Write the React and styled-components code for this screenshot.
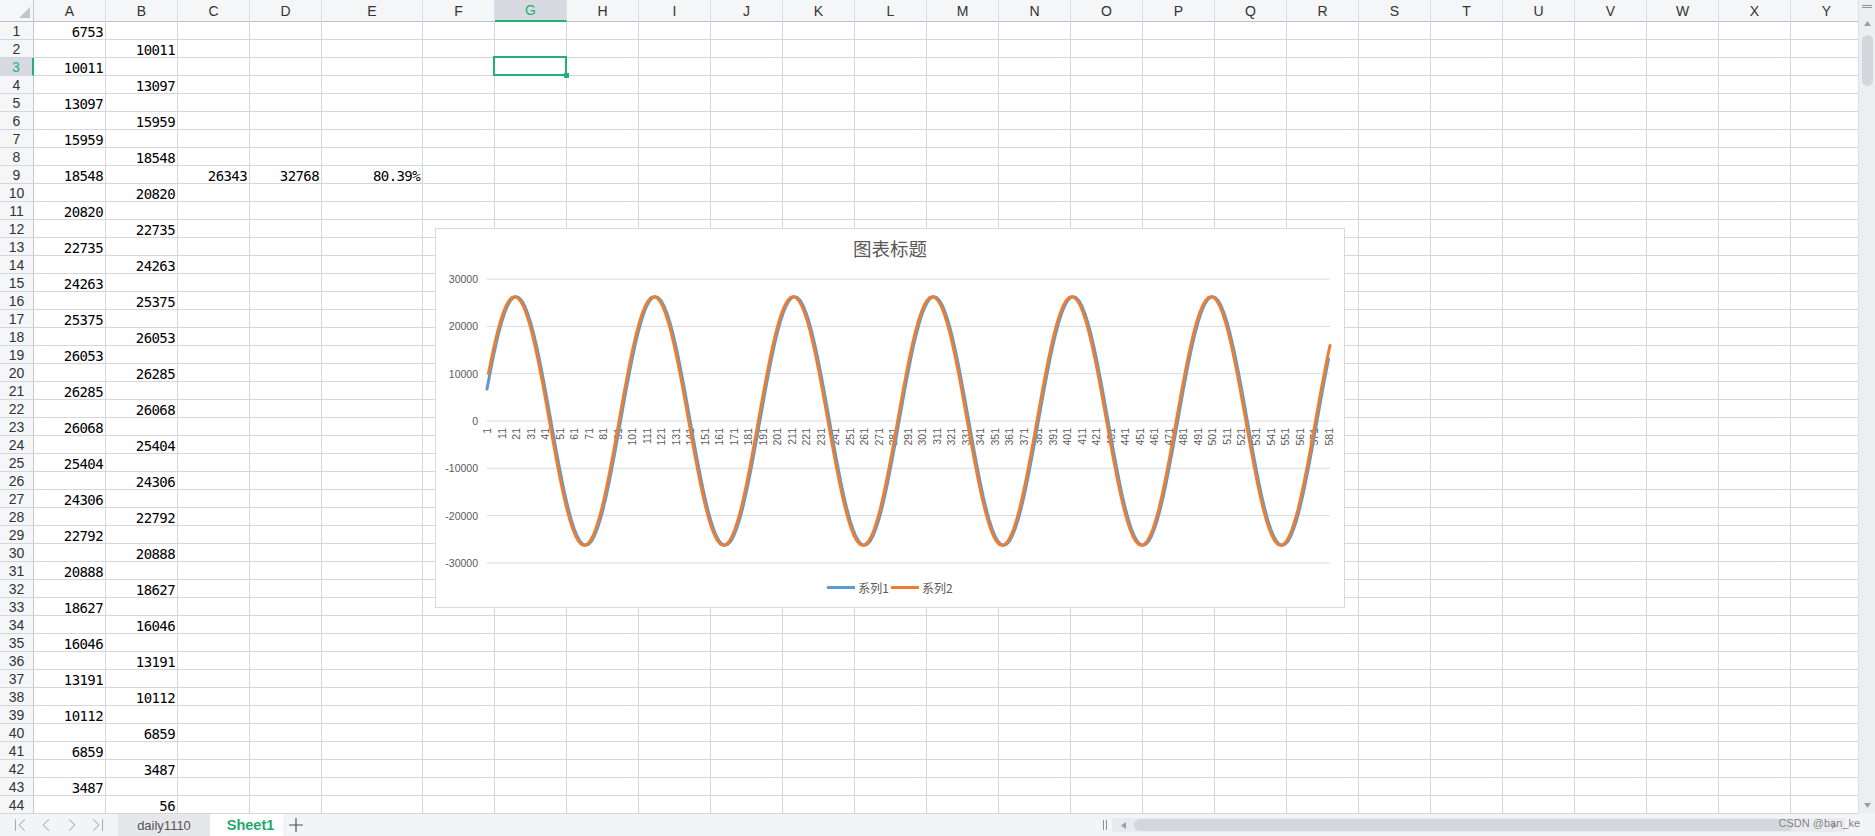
import React from "react";
import styled, { createGlobalStyle } from "styled-components";
import { ChevronFirst, ChevronLeft, ChevronRight, ChevronLast, Plus } from "lucide-react";

const GREEN = "#21b273";
const LINE = "#d2d6df";
const HEAD_BG = "#f5f6f8";
const HEAD_SEL = "#d7dae0";

const GlobalStyle = createGlobalStyle`
  html, body { margin: 0; padding: 0; background: #fff; overflow: hidden; }
`;

const Window = styled.div`
  position: relative;
  width: 1875px;
  height: 836px;
  display: flex;
  flex-direction: column;
  overflow: hidden;
  font-family: "Liberation Sans", Arial, sans-serif;
  background: #fff;
`;

const Main = styled.div`
  display: flex;
  height: 814px;
`;

const SheetArea = styled.div`
  position: relative;
  flex: 1;
  overflow: hidden;
`;

const Sheet = styled.div`
  display: grid;
  grid-template-columns: 34px repeat(4, 72px) 101px repeat(20, 72px);
  grid-template-rows: 22px repeat(44, 18px);
`;

const Corner = styled.div`
  box-sizing: border-box;
  background: ${HEAD_BG};
  border-right: 1px solid #c3c8d1;
  border-bottom: 1px solid #bcc1ca;
  display: flex;
  align-items: flex-end;
  justify-content: flex-end;
  padding: 0 3px 3px 0;
`;

const ColHead = styled.div`
  box-sizing: border-box;
  display: flex;
  align-items: center;
  justify-content: center;
  font-size: 14px;
  color: ${({ $active }) => ($active ? GREEN : "#333")};
  background: ${({ $active }) => ($active ? HEAD_SEL : HEAD_BG)};
  border-right: 1px solid #dcdfe5;
  border-bottom: ${({ $active }) => ($active ? `2px solid ${GREEN}` : "1px solid #bcc1ca")};
`;

const RowHead = styled.div`
  box-sizing: border-box;
  display: flex;
  align-items: center;
  justify-content: center;
  font-size: 14px;
  color: ${({ $active }) => ($active ? GREEN : "#333")};
  background: ${({ $active }) => ($active ? HEAD_SEL : HEAD_BG)};
  border-right: ${({ $active }) => ($active ? `2px solid ${GREEN}` : "1px solid #c3c8d1")};
  border-bottom: 1px solid ${LINE};
`;

const Cell = styled.div`
  box-sizing: border-box;
  position: ${({ $selected }) => ($selected ? "relative" : "static")};
  display: flex;
  align-items: flex-end;
  justify-content: flex-end;
  padding-right: 2px;
  border-right: 1px solid ${LINE};
  border-bottom: 1px solid ${LINE};
  font-family: "DejaVu Sans Mono", "Liberation Mono", monospace;
  font-size: 14px;
  letter-spacing: -0.6px;
  line-height: 13px;
  color: #000;
  white-space: nowrap;
`;

const Selection = styled.div`
  position: absolute;
  top: -2px;
  left: -2px;
  right: -1px;
  bottom: -1px;
  border: 2px solid ${GREEN};
  pointer-events: none;
`;

const FillHandle = styled.div`
  position: absolute;
  right: -4px;
  bottom: -4px;
  width: 5px;
  height: 5px;
  background: ${GREEN};
`;

/* ---------- chart ---------- */

const ChartBox = styled.div`
  position: absolute;
  left: 435px;
  top: 228px;
  width: 910px;
  height: 380px;
  box-sizing: border-box;
  border: 1px solid #d6d9df;
  background: #fff;
  display: flex;
  flex-direction: column;
`;

const ChartTitle = styled.div`
  height: 32px;
  box-sizing: border-box;
  padding-top: 7px;
  line-height: 24px;
  text-align: center;
  font-family: "Noto Sans CJK SC", "Noto Sans", sans-serif;
  font-size: 18.5px;
  color: #595959;
`;

const Plot = styled.svg`
  display: block;
  width: 908px;
  height: 316px;
  font-family: "Liberation Sans", Arial, sans-serif;
`;

const Legend = styled.div`
  height: 20px;
  display: flex;
  align-items: center;
  justify-content: center;
  gap: 2px;
  font-family: "Noto Sans CJK SC", "Noto Sans", sans-serif;
  font-size: 12px;
  color: #595959;
`;

const LegendItem = styled.div`
  display: flex;
  align-items: center;
`;

const Swatch = styled.span`
  width: 28px;
  height: 3px;
  margin-right: 3px;
  background: ${({ $color }) => $color};
`;

const AMP = 26285;
const PH = 0.2597;
const STEP = Math.PI / 48;
const PLOT_L = 51;
const PLOT_R = 894;
const ZERO_Y = 160;
const PX_PER = 0.00473;
const sx = (i) => PLOT_L + (i - 1) * ((PLOT_R - PLOT_L) / 581);
const sy = (v) => ZERO_Y - v * PX_PER;

function seriesPath(start, end, offset) {
  const pts = [];
  for (let r = start; r <= end; r += 2) {
    const v = AMP * Math.sin(PH + (r - 1 + offset) * STEP);
    pts.push(`${sx(r).toFixed(2)},${sy(v).toFixed(2)}`);
  }
  return "M" + pts.join("L");
}

const BLUE_PATH = seriesPath(1, 581, 0);
const ORANGE_PATH = seriesPath(2, 582, 1);
const Y_TICKS = [30000, 20000, 10000, 0, -10000, -20000, -30000];
const X_TICKS = Array.from({ length: 59 }, (_, k) => 1 + k * 10);

function Chart() {
  return (
    <ChartBox>
      <ChartTitle>图表标题</ChartTitle>
      <Plot viewBox="0 0 908 316">
        {Y_TICKS.map((v) => (
          <g key={v}>
            <line x1={PLOT_L} x2={PLOT_R} y1={sy(v)} y2={sy(v)} stroke="#d9d9d9" strokeWidth="1" />
            <text x="42" y={sy(v)} textAnchor="end" dominantBaseline="central" fontSize="10.5" fill="#595959">
              {v}
            </text>
          </g>
        ))}
        {X_TICKS.map((i) => (
          <text
            key={i}
            transform={`translate(${sx(i).toFixed(2)},167) rotate(-90)`}
            textAnchor="end"
            dominantBaseline="central"
            fontSize="10.5"
            fill="#595959"
          >
            {i}
          </text>
        ))}
        <path d={BLUE_PATH} fill="none" stroke="#5b9bd5" strokeWidth="3" strokeLinejoin="round" strokeLinecap="round" />
        <path d={ORANGE_PATH} fill="none" stroke="#ed7d31" strokeWidth="3" strokeLinejoin="round" strokeLinecap="round" />
      </Plot>
      <Legend>
        <LegendItem>
          <Swatch $color="#5b9bd5" />
          系列1
        </LegendItem>
        <LegendItem>
          <Swatch $color="#ed7d31" />
          系列2
        </LegendItem>
      </Legend>
    </ChartBox>
  );
}

/* ---------- scrollbars & bottom bar ---------- */

const VScroll = styled.div`
  width: 17px;
  flex-shrink: 0;
  box-sizing: border-box;
  border-left: 1px solid #dde0e6;
  background: #eceef2;
  display: flex;
  flex-direction: column;
  align-items: center;
`;

const MenuLines = styled.div`
  margin-top: 5px;
  width: 10px;
  height: 1px;
  border-top: 1px solid #8f959e;
  border-bottom: 1px solid #8f959e;
`;

const ArrowSlot = styled.div`
  height: 18px;
  width: 100%;
  display: flex;
  align-items: center;
  justify-content: center;
  flex-shrink: 0;
`;

const VThumb = styled.div`
  margin-top: 3px;
  width: 11px;
  height: 51px;
  border-radius: 6px;
  background: #d3d6dc;
`;

const Spacer = styled.div`
  flex: 1;
`;

const Tri = ({ dir }) => {
  const pts = {
    up: "0,5 3.5,0 7,5",
    down: "0,0 7,0 3.5,5",
    left: "5,0 5,7 0,3.5",
    right: "0,0 0,7 5,3.5",
  }[dir];
  const vertical = dir === "up" || dir === "down";
  return (
    <svg width={vertical ? 7 : 5} height={vertical ? 5 : 7}>
      <polygon points={pts} fill="#9aa0aa" />
    </svg>
  );
};

const BottomBar = styled.div`
  height: 22px;
  display: flex;
  align-items: stretch;
  background: #f3f4f6;
`;

const NavGroup = styled.div`
  display: flex;
  padding-left: 7px;
  margin-right: 7px;
  color: #a3a8b0;
`;

const NavButton = styled.div`
  width: 26px;
  display: flex;
  align-items: center;
  justify-content: center;
`;

const Tab = styled.div`
  width: ${({ $w }) => $w}px;
  box-sizing: border-box;
  display: flex;
  align-items: center;
  justify-content: center;
  padding-left: ${({ $active }) => ($active ? 8 : 0)}px;
  background: ${({ $active }) => ($active ? "#fff" : "#e5e7eb")};
  color: ${({ $active }) => ($active ? "#1ea86a" : "#555")};
  font-weight: ${({ $active }) => ($active ? 700 : 400)};
  font-size: ${({ $active }) => ($active ? 14.5 : 13)}px;
`;

const AddTab = styled.div`
  width: 26px;
  display: flex;
  align-items: center;
  justify-content: center;
  color: #444;
`;

const HScrollArea = styled.div`
  width: 777px;
  display: flex;
  align-items: center;
`;

const Grip = styled.div`
  width: 14px;
  display: flex;
  justify-content: center;
  gap: 2px;
  &::before,
  &::after {
    content: "";
    width: 1px;
    height: 10px;
    background: #8b9098;
  }
`;

const HTrack = styled.div`
  width: 733px;
  height: 14px;
  display: flex;
  align-items: center;
  background: #e8eaee;
`;

const HArrow = styled.div`
  width: 22px;
  display: flex;
  justify-content: center;
`;

const HThumb = styled.div`
  width: 659px;
  height: 12px;
  border-radius: 6px;
  background: #d3d6dc;
`;

const Watermark = styled.div`
  position: absolute;
  right: 15px;
  bottom: 7px;
  font-size: 11px;
  color: rgba(80, 80, 80, 0.75);
  text-shadow: 0 0 2px #fff;
  pointer-events: none;
`;

/* ---------- data ---------- */

const COLS = "ABCDEFGHIJKLMNOPQRSTUVWXY".split("");
const COL_A = [6753, 10011, 13097, 15959, 18548, 20820, 22735, 24263, 25375, 26053, 26285, 26068, 25404, 24306, 22792, 20888, 18627, 16046, 13191, 10112, 6859, 3487];
const COL_B = [10011, 13097, 15959, 18548, 20820, 22735, 24263, 25375, 26053, 26285, 26068, 25404, 24306, 22792, 20888, 18627, 16046, 13191, 10112, 6859, 3487, 56];
const EXTRA = { "9-2": "26343", "9-3": "32768", "9-4": "80.39%" };

function cellValue(row, col) {
  if (col === 0 && row % 2 === 1) return COL_A[(row - 1) / 2];
  if (col === 1 && row % 2 === 0) return COL_B[row / 2 - 1];
  return EXTRA[`${row}-${col}`] || "";
}

const ROWS = Array.from({ length: 44 }, (_, i) => i + 1);
const SEL_ROW = 3;
const SEL_COL = 6;

export default function App() {
  return (
    <>
      <GlobalStyle />
      <Window>
        <Main>
          <SheetArea>
            <Sheet>
              <Corner>
                <svg width="11" height="11">
                  <polygon points="11,0 11,11 0,11" fill="#c1c5cc" />
                </svg>
              </Corner>
              {COLS.map((c, ci) => (
                <ColHead key={c} $active={ci === SEL_COL}>
                  {c}
                </ColHead>
              ))}
              {ROWS.map((r) => (
                <React.Fragment key={r}>
                  <RowHead $active={r === SEL_ROW}>{r}</RowHead>
                  {COLS.map((c, ci) => {
                    const selected = r === SEL_ROW && ci === SEL_COL;
                    return (
                      <Cell key={c} $selected={selected}>
                        {cellValue(r, ci)}
                        {selected && (
                          <Selection>
                            <FillHandle />
                          </Selection>
                        )}
                      </Cell>
                    );
                  })}
                </React.Fragment>
              ))}
            </Sheet>
            <Chart />
          </SheetArea>
          <VScroll>
            <MenuLines />
            <ArrowSlot style={{ marginTop: 6 }}>
              <Tri dir="up" />
            </ArrowSlot>
            <VThumb />
            <Spacer />
            <ArrowSlot>
              <Tri dir="down" />
            </ArrowSlot>
          </VScroll>
        </Main>
        <BottomBar>
          <NavGroup>
            <NavButton>
              <ChevronFirst size={22} strokeWidth={1.1} />
            </NavButton>
            <NavButton>
              <ChevronLeft size={22} strokeWidth={1.1} />
            </NavButton>
            <NavButton>
              <ChevronRight size={22} strokeWidth={1.1} />
            </NavButton>
            <NavButton>
              <ChevronLast size={22} strokeWidth={1.1} />
            </NavButton>
          </NavGroup>
          <Tab $w={92}>daily1110</Tab>
          <Tab $w={73} $active>
            Sheet1
          </Tab>
          <AddTab>
            <Plus size={22} strokeWidth={1.2} />
          </AddTab>
          <Spacer />
          <HScrollArea>
            <Grip />
            <HTrack>
              <HArrow>
                <Tri dir="left" />
              </HArrow>
              <HThumb />
              <Spacer />
              <HArrow>
                <Tri dir="right" />
              </HArrow>
            </HTrack>
          </HScrollArea>
        </BottomBar>
        <Watermark>CSDN @ban_ke</Watermark>
      </Window>
    </>
  );
}
